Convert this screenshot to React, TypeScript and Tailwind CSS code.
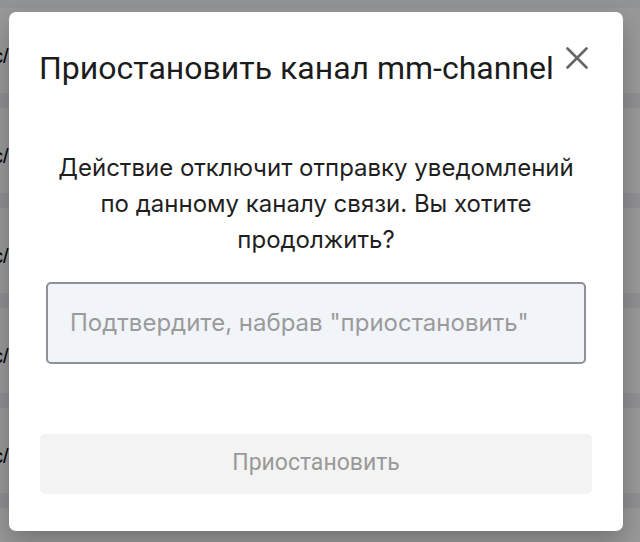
import React from "react";

const rows = [0, 1, 2, 3, 4];

function CloseIcon() {
    return (
        <svg width="22" height="22" viewBox="0 0 22 22" fill="none">
            <path d="M1.5 1.5L20.5 20.5M20.5 1.5L1.5 20.5" stroke="#666" strokeWidth="2.6" strokeLinecap="round" />
        </svg>
    );
}

export default function App() {
    return (
        <div className="relative w-[640px] h-[542px] overflow-hidden bg-white font-['Inter',sans-serif]">
            {/* page behind the dialog */}
            <div className="flex flex-col">
                <div className="h-[8px] bg-[#f4f5f8]" />
                {rows.map((r) => (
                    <div key={r} className="flex flex-col">
                        <div className="h-[85px] flex items-center pt-[11px] text-[20px] text-black font-['Liberation_Sans',sans-serif]">
                            <span className="-ml-[7px]">c/</span>
                        </div>
                        <div className="h-[15px] bg-[#f0f1f3]" />
                    </div>
                ))}
            </div>

            {/* overlay */}
            <div className="absolute inset-0 bg-black/40 flex items-center justify-center pr-[8px]">
                <div className="w-[614px] h-[519px] bg-white rounded-[7px] shadow-[0_10px_25px_rgba(0,0,0,0.25)] px-[31px] pt-[38px] pb-[37px] flex flex-col">
                    <div className="flex items-start justify-between">
                        <h2 className="font-['Roboto',sans-serif] text-[32px] leading-[36px] text-[#1c1c1c] -ml-px whitespace-nowrap">
                            Приостановить канал mm-channel
                        </h2>
                        <button className="mt-[-3px] mr-[4px]">
                            <CloseIcon />
                        </button>
                    </div>

                    <p className="mt-[64px] text-center text-[24px] leading-[36px] text-[#1f1f1f] px-[10px]">
                        Действие отключит отправку уведомлений по данному каналу связи. Вы хотите продолжить?
                    </p>

                    <div className="mt-[24px] mx-[6px] h-[82px] rounded-[5px] border-2 border-[#8e9197] bg-[#f1f4f9] flex items-center px-[22px]">
                        <input
                            className="w-full bg-transparent outline-none text-[24px] text-[#1f1f1f] placeholder:text-[#9b9b9b]"
                            placeholder={'Подтвердите, набрав "приостановить"'}
                        />
                    </div>

                    <div className="flex-1" />

                    <button className="h-[60px] w-full rounded-[5px] bg-[#f3f3f3] text-[#999999] text-[23px] font-['Roboto',sans-serif]">
                        Приостановить
                    </button>
                </div>
            </div>
        </div>
    );
}
